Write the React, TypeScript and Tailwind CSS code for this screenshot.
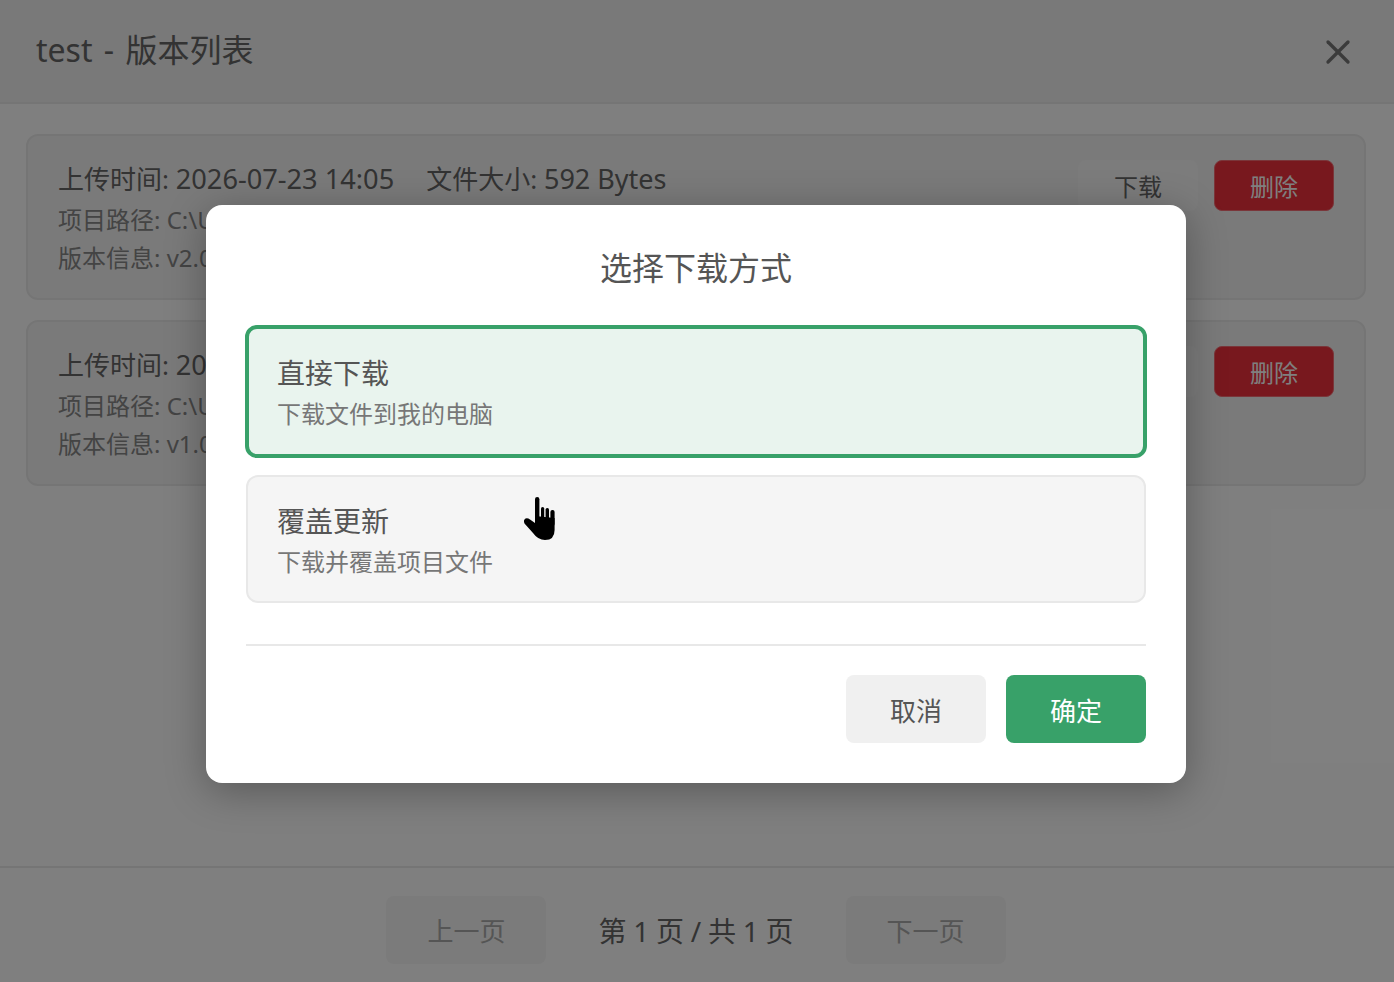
import React from "react";
import { X } from "lucide-react";

const font = { fontFamily: '"Noto Sans", "Noto Sans CJK SC", sans-serif' };

function VersionCard({ time, size, path, version }: { time: string; size: string; path: string; version: string }) {
  return (
    <div className="flex h-[166px] items-start justify-between rounded-xl border-2 border-[#ebebeb] bg-[#f5f5f5] pl-[30px] pr-[30px] pt-[24px]">
      <div className="-mt-[1px]">
        <div className="flex gap-8 text-[26px] leading-[40px] text-[#666]">
          <span>
            上传时间: <span className="text-[27.2px]">{time}</span>
          </span>
          <span>
            文件大小: <span className="text-[27px]">{size}</span>
          </span>
        </div>
        <div className="mt-[2px] text-[24px] leading-[38px] text-[#888]">项目路径: {path}</div>
        <div className="text-[24px] leading-[38px] text-[#888]">版本信息: {version}</div>
      </div>
      <div className="flex gap-4">
        <button className="h-[51px] w-[120px] rounded-lg bg-[#f8f8f8] pt-[3px] text-[24px] text-[#666]">下载</button>
        <button className="h-[51px] w-[120px] rounded-lg border border-[#f56c74] bg-[#f0303c] pt-[3px] text-[24px] text-white">删除</button>
      </div>
    </div>
  );
}

function HandCursor() {
  return (
    <svg width="60" height="60" viewBox="0 0 60 60" className="absolute left-[510px] top-[485px]">
      <rect x="25" y="12" width="4.4" height="26" rx="2.2" fill="#000" />
      <rect x="31" y="22" width="3.2" height="16" rx="1.6" fill="#000" />
      <rect x="35.6" y="23" width="3.4" height="16" rx="1.6" fill="#000" />
      <rect x="40.4" y="25" width="4.2" height="16" rx="2" fill="#000" />
      <path d="M25 31 L44.6 33 L44.6 45 Q44.6 55 35 55 Q28 55 23 48 L14.5 38.5 Q13 35 15.5 33.5 Q17.5 32.5 20 34.5 L25 38 Z" fill="#000" />
    </svg>
  );
}

export default function App() {
  return (
    <div className="relative flex h-[982px] w-[1394px] flex-col overflow-hidden bg-white" style={font}>
      <div className="flex h-[104px] shrink-0 items-center justify-between border-b-2 border-[#ebebeb] bg-[#f2f2f2] pl-[36px] pr-[36px]">
        <h1 className="-mt-[2px] text-[32px] font-normal text-[#666] [word-spacing:3px]">test - 版本列表</h1>
        <X size={40} strokeWidth={2} className="mt-[2px] text-[#777]" />
      </div>
      <div className="flex flex-1 flex-col gap-5 pl-[26px] pr-[28px] pt-[30px]">
        <VersionCard time="2026-07-23 14:05" size="592 Bytes" path="C:\Users\test" version="v2.0" />
        <VersionCard time="2026-07-23 13:58" size="592 Bytes" path="C:\Users\test" version="v1.0" />
      </div>
      <div className="flex h-[116px] shrink-0 items-start justify-center gap-[52px] border-t-2 border-[#ebebeb] pr-[2px] pt-[28px]">
        <button className="h-[68px] w-[160px] rounded-lg bg-[#f6f6f6] pt-[2px] text-[26px] text-[#aaa]">上一页</button>
        <span className="flex h-[68px] items-center pt-[2px] text-[28px] text-[#666] [word-spacing:-0.5px]">第 1 页 / 共 1 页</span>
        <button className="h-[68px] w-[160px] rounded-lg bg-[#f6f6f6] pt-[2px] text-[26px] text-[#aaa]">下一页</button>
      </div>

      <div className="absolute inset-0 flex items-start justify-center bg-black/50 pr-[2px] pt-[205px]">
        <div className="h-[578px] w-[980px] rounded-2xl bg-white px-[40px] pt-[40px] shadow-[0_8px_40px_rgba(0,0,0,0.3)]">
          <h2 className="text-center text-[32px] font-normal leading-[46px] text-[#555]">选择下载方式</h2>
          <div className="-mx-px mt-[34px] h-[133px] rounded-xl border-4 border-[#38a169] bg-[#e9f4ee] pl-[28px] pt-6">
            <div className="text-[28px] leading-[40px] text-[#555]">直接下载</div>
            <div className="mt-[3px] text-[24px] leading-[36px] text-[#777]">下载文件到我的电脑</div>
          </div>
          <div className="mt-[17px] h-[128px] rounded-xl border-2 border-[#e8e8e8] bg-[#f5f5f5] pl-[29px] pt-6">
            <div className="text-[28px] leading-[40px] text-[#555]">覆盖更新</div>
            <div className="mt-[3px] text-[24px] leading-[36px] text-[#777]">下载并覆盖项目文件</div>
          </div>
          <div className="mt-[41px] h-[2px] bg-[#e8e8e8]" />
          <div className="mt-[29px] flex justify-end gap-5">
            <button className="h-[68px] w-[140px] rounded-lg bg-[#f0f0f0] pt-[4px] text-[26px] text-[#555]">取消</button>
            <button className="h-[68px] w-[140px] rounded-lg bg-[#38a169] pt-[4px] text-[26px] text-white">确定</button>
          </div>
        </div>
      </div>
      <HandCursor />
    </div>
  );
}
